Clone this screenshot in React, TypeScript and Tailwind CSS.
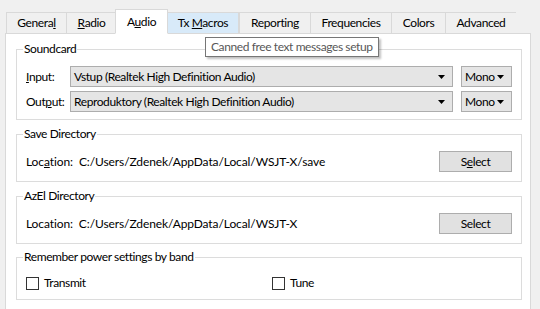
import type { ReactNode } from 'react'

const tabs: { label: ReactNode; w: string; state?: 'active' | 'hover' }[] = [
  { label: <>Genera<u>l</u></>, w: 'w-[60px]' },
  { label: <><u>R</u>adio</>, w: 'w-[50px]' },
  { label: <>A<u>u</u>dio</>, w: 'w-[53px]', state: 'active' },
  { label: <>Tx <u>M</u>acros</>, w: 'w-[72px]', state: 'hover' },
  { label: <>Reportin<u>g</u></>, w: 'w-[71px]' },
  { label: <>Frequencies</>, w: 'w-[81px]' },
  { label: <>Colors</>, w: 'w-[54px]' },
  { label: <>Advanced</>, w: 'w-[71px]' },
]

function Arrow() {
  return (
    <svg width="7" height="4" viewBox="0 0 7 4" className="shrink-0">
      <path d="M0 0H7L3.5 4Z" fill="#000" />
    </svg>
  )
}

function Combo({ text, className }: { text: string; className: string }) {
  return (
    <div
      className={`flex h-[21px] items-center justify-between border border-[#adadad] bg-[#e5e5e5] pl-[3px] pr-[7px] ${className}`}
    >
      <span className="min-w-0 whitespace-nowrap">{text}</span>
      <Arrow />
    </div>
  )
}

function Group({ title, className, children }: { title: string; className: string; children: ReactNode }) {
  return (
    <fieldset className={`ml-[10px] mr-[8px] border border-[#dcdcdc] px-[9px] ${className}`}>
      <legend className="-ml-[3px] h-[16px] px-[1px] leading-[16px]">{title}</legend>
      {children}
    </fieldset>
  )
}

function Button({ children }: { children: ReactNode }) {
  return (
    <div className="flex h-[21px] w-[73px] items-center justify-center border border-[#adadad] bg-[#e1e1e1]">
      <span>{children}</span>
    </div>
  )
}

function Checkbox({ label, className }: { label: string; className?: string }) {
  return (
    <div className={`flex h-[16px] items-center gap-[5px] ${className ?? ''}`}>
      <div className="h-[13px] w-[13px] border border-[#333] bg-white" />
      <span>{label}</span>
    </div>
  )
}

export default function App() {
  return (
    <div
      className="relative h-[309px] w-[540px] overflow-hidden bg-[#f0f0f0] text-[12px] leading-[16px] tracking-[-0.4px] text-black"
      style={{ fontFamily: 'Lato, "Noto Sans", sans-serif' }}
    >
      <div className="flex h-[34px] items-end pl-[6px]">
        {tabs.map((t, i) => (
          <div
            key={i}
            className={`flex items-center justify-center border border-[#d9d9d9] ${t.w} ${
              t.state === 'active'
                ? 'relative z-10 -mx-[1px] h-[25px] border-b-white bg-white'
                : t.state === 'hover'
                  ? 'h-[22px] border-[#d8eaf9] bg-[#d8eaf9]'
                  : 'h-[22px] border-r-0 bg-[#f0f0f0]'
            } ${i === tabs.length - 1 ? 'border-r' : ''}`}
          >
            <span className="whitespace-pre">{t.label}</span>
          </div>
        ))}
      </div>

      <div className="-mt-px ml-[5px] h-[280px] w-[526px] border border-[#d9d9d9] bg-white">
        <Group title="Soundcard" className="mt-[7px] pb-[7px] pt-[9px]">
          <div className="flex flex-col gap-[4px]">
            <div className="flex items-center">
              <span className="w-[44px]">
                <u>I</u>nput:
              </span>
              <Combo text="Vstup (Realtek High Definition Audio)" className="w-[383px]" />
              <Combo text="Mono" className="ml-[8px] w-[51px]" />
            </div>
            <div className="flex items-center">
              <span className="w-[44px]">
                Out<u>p</u>ut:
              </span>
              <Combo text="Reproduktory (Realtek High Definition Audio)" className="w-[383px]" />
              <Combo text="Mono" className="ml-[8px] w-[51px]" />
            </div>
          </div>
        </Group>

        <Group title="Save Directory" className="mt-[6px] pb-[9px] pt-[9px]">
          <div className="flex items-center justify-between">
            <span className="whitespace-pre tracking-[-0.1px]">
              Loc<u>a</u>tion:  C:/Users/Zdenek/AppData/Local/WSJT-X/save
            </span>
            <Button>
              S<u>e</u>lect
            </Button>
          </div>
        </Group>

        <Group title="AzEl Directory" className="mt-[6px] pb-[9px] pt-[9px]">
          <div className="flex items-center justify-between">
            <span className="whitespace-pre tracking-[-0.1px]">Location:  C:/Users/Zdenek/AppData/Local/WSJT-X</span>
            <Button>Select</Button>
          </div>
        </Group>

        <Group title="Remember power settings by band" className="mt-[5px] pb-[8px] pt-[10px]">
          <div className="flex">
            <Checkbox label="Transmit" className="w-[246px]" />
            <Checkbox label="Tune" />
          </div>
        </Group>
      </div>

      <div className="absolute left-[205px] top-[37px] border border-[#767676] bg-white px-[5px] py-[1px] text-[#575757] shadow-[2px_2px_2px_rgba(0,0,0,0.25)]">
        Canned free text messages setup
      </div>
    </div>
  )
}
